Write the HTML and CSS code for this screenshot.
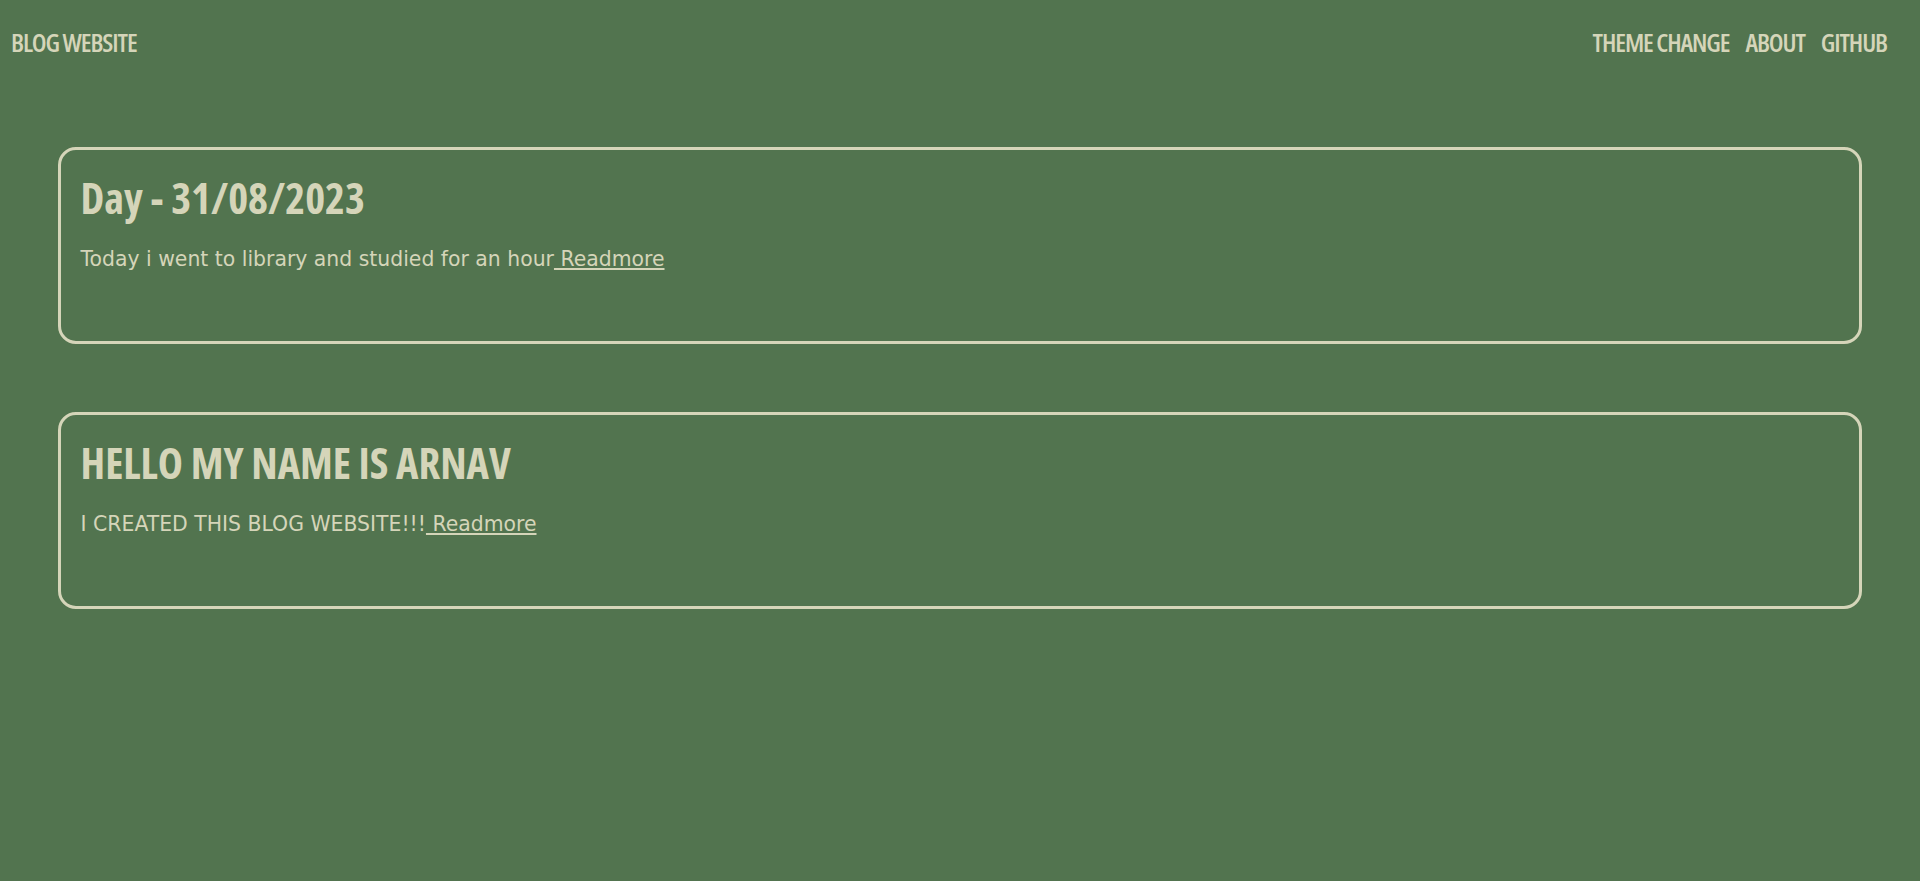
FILE: index.html
```html
<!DOCTYPE html>
<html lang="en">
<head>
<meta charset="utf-8">
<title>Blog Website</title>
<link rel="stylesheet" href="styles.css">
</head>
<body>
<header class="topbar">
  <a class="brand" href="#">BLOG WEBSITE</a>
  <nav class="nav">
    <a class="nav-link" href="#">THEME CHANGE</a>
    <a class="nav-link" href="#">ABOUT</a>
    <a class="nav-link" href="#">GITHUB</a>
  </nav>
</header>
<main class="posts">
  <article class="card">
    <h2 class="card-title">Day - 31/08/2023</h2>
    <p class="card-text">Today i went to library and studied for an hour<a class="more" href="#"> Readmore</a></p>
  </article>
  <article class="card">
    <h2 class="card-title">HELLO MY NAME IS ARNAV</h2>
    <p class="card-text">I CREATED THIS BLOG WEBSITE!!!<a class="more" href="#"> Readmore</a></p>
  </article>
</main>
</body>
</html>
```
FILE: styles.css
```css
html, body {
  margin: 0;
  padding: 0;
}
body {
  background: #52744f;
  color: #d5d5b9;
  font-family: "DejaVu Sans", Verdana, sans-serif;
  min-height: 881px;
}
.topbar {
  display: flex;
  justify-content: space-between;
  align-items: center;
  padding: 24px 33px 22px 11px;
}
.brand,
.nav-link {
  font-family: "Open Sans", sans-serif;
  font-stretch: 75%;
  font-weight: 600;
  font-size: 26px;
  letter-spacing: -1.1px;
  line-height: normal;
  color: #d5d5b9;
  text-decoration: none;
}
.nav {
  display: flex;
  gap: 16px;
}
.posts {
  display: flex;
  flex-direction: column;
  gap: 68px;
  padding: 65px 3% 0;
}
.card {
  border: 3px solid #d5d5b9;
  border-radius: 18px;
  padding: 20px 20px 70px;
}
.card-title {
  font-family: "Open Sans", sans-serif;
  font-stretch: 75%;
  font-weight: 700;
  font-size: 42.5px;
  line-height: 1.2;
  margin: 2px 0 24px;
  color: #d5d5b9;
}
.card-text {
  font-size: 20.4px;
  line-height: normal;
  margin: 0;
}
.more {
  color: #d5d5b9;
  text-decoration: underline;
}
```
